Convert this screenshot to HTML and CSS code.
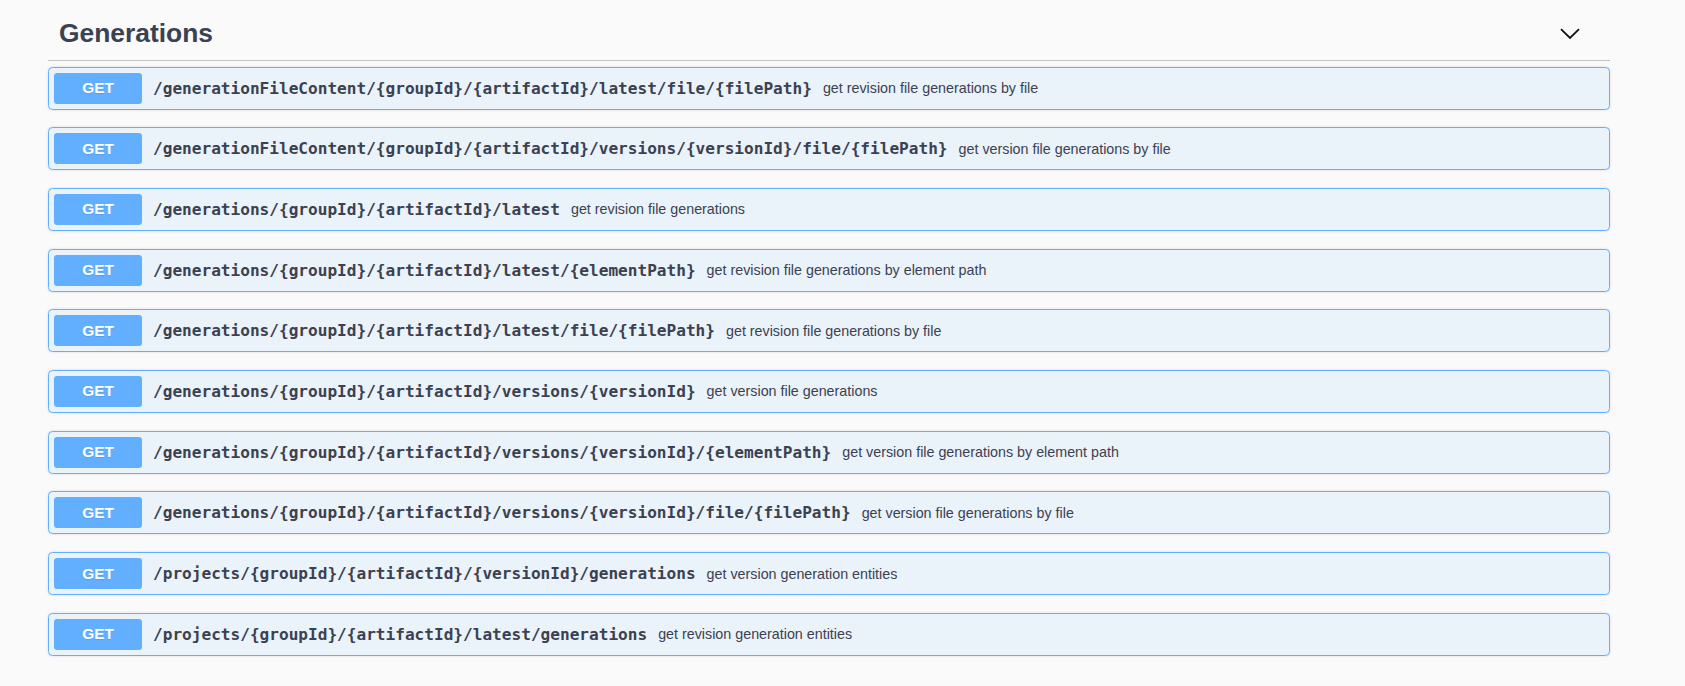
FILE: index.html
```html
<!DOCTYPE html>
<html>
<head>
<meta charset="utf-8">
<title>Generations</title>
<link rel="stylesheet" href="styles.css">
</head>
<body>
<div class="section">
  <div class="tag">
    <h4 class="tag-title">Generations</h4>
    <svg class="chevron" width="20" height="12" viewBox="0 0 20 12"><polyline points="1,1.2 10,10 19,1.2" fill="none" stroke="#111" stroke-width="1.8"/></svg>
  </div>
  <div class="ops">
    <div class="op"><span class="method">GET</span><span class="path">/generationFileContent/{groupId}/{artifactId}/latest/file/{filePath}</span><span class="desc">get revision file generations by file</span></div>
    <div class="op"><span class="method">GET</span><span class="path">/generationFileContent/{groupId}/{artifactId}/versions/{versionId}/file/{filePath}</span><span class="desc">get version file generations by file</span></div>
    <div class="op"><span class="method">GET</span><span class="path">/generations/{groupId}/{artifactId}/latest</span><span class="desc">get revision file generations</span></div>
    <div class="op"><span class="method">GET</span><span class="path">/generations/{groupId}/{artifactId}/latest/{elementPath}</span><span class="desc">get revision file generations by element path</span></div>
    <div class="op"><span class="method">GET</span><span class="path">/generations/{groupId}/{artifactId}/latest/file/{filePath}</span><span class="desc">get revision file generations by file</span></div>
    <div class="op"><span class="method">GET</span><span class="path">/generations/{groupId}/{artifactId}/versions/{versionId}</span><span class="desc">get version file generations</span></div>
    <div class="op"><span class="method">GET</span><span class="path">/generations/{groupId}/{artifactId}/versions/{versionId}/{elementPath}</span><span class="desc">get version file generations by element path</span></div>
    <div class="op"><span class="method">GET</span><span class="path">/generations/{groupId}/{artifactId}/versions/{versionId}/file/{filePath}</span><span class="desc">get version file generations by file</span></div>
    <div class="op"><span class="method">GET</span><span class="path">/projects/{groupId}/{artifactId}/{versionId}/generations</span><span class="desc">get version generation entities</span></div>
    <div class="op"><span class="method">GET</span><span class="path">/projects/{groupId}/{artifactId}/latest/generations</span><span class="desc">get revision generation entities</span></div>
  </div>
</div>
</body>
</html>
```

FILE: styles.css
```css
html, body {
  margin: 0;
  padding: 0;
  background: #fafafa;
}
body {
  font-family: "Liberation Sans", Arial, sans-serif;
  color: #3b4151;
}
.section {
  margin-left: 48px;
  width: 1562px;
  padding-top: 7px;
}
.tag {
  display: flex;
  align-items: center;
  padding: 11px 22px 11px 11px;
  border-bottom: 1px solid rgba(59, 65, 81, 0.3);
  margin-bottom: 5.5px;
}
.tag-title {
  margin: 0;
  font-size: 26.4px;
  font-weight: bold;
  line-height: normal;
  color: #3b4151;
  flex: 1;
}
.chevron {
  margin-right: 8px;
  display: block;
}
.op {
  display: flex;
  align-items: center;
  padding: 5px;
  border: 1px solid #61affe;
  background: rgba(97, 175, 254, 0.1);
  border-radius: 4.4px;
  box-shadow: 0 0 3px rgba(0, 0, 0, 0.12);
  margin-bottom: 17.7px;
}
.method {
  flex: none;
  width: 88px;
  height: 31px;
  display: flex;
  align-items: center;
  justify-content: center;
  background: #61affe;
  color: #fff;
  font-size: 15.4px;
  font-weight: bold;
  border-radius: 3.3px;
  text-shadow: 0 1px 0 rgba(0, 0, 0, 0.1);
}
.path {
  padding: 0 11px;
  font-family: "DejaVu Sans Mono", "Liberation Mono", monospace;
  font-weight: bold;
  font-size: 16.1px;
  color: #3b4151;
  white-space: nowrap;
}
.desc {
  font-size: 14.3px;
  color: #3b4151;
}
```
